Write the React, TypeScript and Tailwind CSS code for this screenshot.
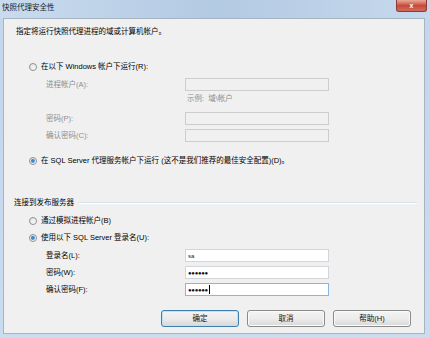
import React from "react";

const font = "font-['Liberation_Sans','Noto_Sans_CJK_SC',sans-serif]";

function Radio({ checked }: { checked?: boolean }) {
  return (
    <span className="flex h-[8px] w-[8px] items-center justify-center rounded-full border border-[#8e8f8f] bg-gradient-to-br from-[#e2e2e2] to-[#fdfdfd]">
      {checked && (
        <span className="h-[4px] w-[4px] rounded-full bg-gradient-to-br from-[#2b6cb0] to-[#5fa6e8]" />
      )}
    </span>
  );
}

function Input({
  disabled,
  focused,
  children,
}: {
  disabled?: boolean;
  focused?: boolean;
  children?: React.ReactNode;
}) {
  const cls = disabled
    ? "border-[#cdcdcd] bg-[#f0f0f0]"
    : focused
    ? "border-[#86b6e4] bg-white"
    : "border-[#d2d6db] bg-white";
  return (
    <div
      className={`ml-auto mr-[95px] flex h-[13px] w-[144px] items-center border pl-[2px] text-[6px] leading-none text-[#222] ${cls}`}
    >
      {children}
    </div>
  );
}

function Dots({ cursor }: { cursor?: boolean }) {
  return (
    <span className="flex items-center">
      <span className="text-[6px] tracking-[-0.3px] text-[#111]">●●●●●●</span>
      {cursor && <span className="ml-[1px] h-[9px] w-px bg-black" />}
    </span>
  );
}

function Button({ label, primary }: { label: string; primary?: boolean }) {
  return (
    <div
      className={`flex h-[17px] w-[78px] items-center justify-center rounded-[3px] border text-[7.5px] text-[#111] ${
        primary
          ? "border-[#3c7fb1] shadow-[inset_0_0_0_1px_#b8e4f8]"
          : "border-[#8a8a8a] shadow-[inset_0_0_0_1px_#fbfbfb]"
      } bg-gradient-to-b from-[#f4f4f4] via-[#ececec] to-[#d9d9d9]`}
    >
      {label}
    </div>
  );
}

export default function App() {
  return (
    <div
      className={`flex h-[338px] w-[430px] flex-col bg-gradient-to-b from-[#c2d6ec] to-[#c9dcf0] ${font} text-[7.5px] leading-none`}
    >
      {/* Title bar */}
      <div className="flex h-[18px] items-start bg-gradient-to-r from-[#c9dbee] via-[#b3cae3] to-[#c6d8ec]">
        <span className="ml-[2px] mt-[4px] text-[7.5px] text-[#1b1b1b]">快照代理安全性</span>
        <div className="ml-auto mr-[3px] flex h-[12px] w-[31px] items-center justify-center rounded-b-[3px] border border-t-0 border-[#8b3a3a] bg-gradient-to-b from-[#e9a99a] via-[#c94a3b] to-[#d0695a] text-[7px] font-bold text-white">
          x
        </div>
      </div>

      {/* Content */}
      <div className="mb-[4px] ml-[3px] mr-[5px] flex flex-1 flex-col border border-[#a7b4c2] bg-[#f0f0f0] text-black">
        <div className="ml-[12px] mt-[7px] flex h-[12px] items-center">
          指定将运行快照代理进程的域或计算机帐户。
        </div>

        <div className="ml-[25px] mt-[23px] flex h-[12px] items-center gap-[4px]">
          <Radio />
          <span>在以下 Windows 帐户下运行(R):</span>
        </div>

        <div className="mt-[5px] flex h-[13px] items-center text-[#8d8d8d]">
          <span className="ml-[42px]">进程帐户(A):</span>
          <Input disabled />
        </div>
        <div className="mt-[3px] flex h-[10px] items-center text-[#8d8d8d]">
          <span className="ml-[183px]">示例:&nbsp;&nbsp;域\帐户</span>
        </div>
        <div className="mt-[8px] flex h-[13px] items-center text-[#8d8d8d]">
          <span className="ml-[42px]">密码(P):</span>
          <Input disabled />
        </div>
        <div className="mt-[4px] flex h-[13px] items-center text-[#8d8d8d]">
          <span className="ml-[42px]">确认密码(C):</span>
          <Input disabled />
        </div>

        <div className="ml-[25px] mt-[13px] flex h-[12px] items-center gap-[4px]">
          <Radio checked />
          <span>在 SQL Server 代理服务帐户下运行 (这不是我们推荐的最佳安全配置)(D)。</span>
        </div>

        <div className="ml-[10px] mr-[7px] mt-[30px] flex h-[12px] items-center">
          <span>连接到发布服务器</span>
          <div className="ml-[5px] flex-1 border-b border-t border-b-white border-t-[#d5dfe5]" />
        </div>

        <div className="ml-[25px] mt-[6px] flex h-[12px] items-center gap-[4px]">
          <Radio />
          <span>通过模拟进程帐户(B)</span>
        </div>
        <div className="ml-[25px] mt-[5px] flex h-[12px] items-center gap-[4px]">
          <Radio checked />
          <span>使用以下 SQL Server 登录名(U):</span>
        </div>

        <div className="mt-[5px] flex h-[13px] items-center">
          <span className="ml-[42px]">登录名(L):</span>
          <Input>sa</Input>
        </div>
        <div className="mt-[4px] flex h-[13px] items-center">
          <span className="ml-[42px]">密码(W):</span>
          <Input>
            <Dots />
          </Input>
        </div>
        <div className="mt-[4px] flex h-[13px] items-center">
          <span className="ml-[42px]">确认密码(F):</span>
          <Input focused>
            <Dots cursor />
          </Input>
        </div>

        <div className="mt-[14px] flex justify-end gap-[8px] pr-[13px]">
          <Button label="确定" primary />
          <Button label="取消" />
          <Button label="帮助(H)" />
        </div>
      </div>
    </div>
  );
}
